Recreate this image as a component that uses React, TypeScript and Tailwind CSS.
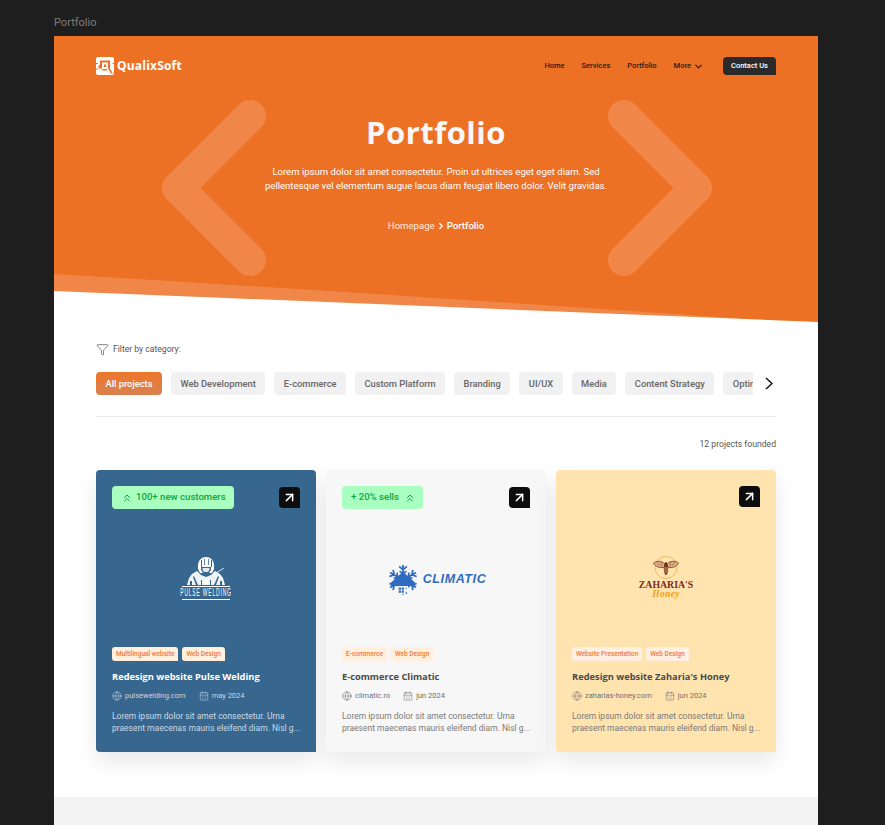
import { ArrowUpRight, CalendarDays, ChevronDown, ChevronRight, ChevronsUp, Funnel, Globe } from "lucide-react";
import clsx from "clsx";

const categories = ["Web Development", "E-commerce", "Custom Platform", "Branding", "UI/UX", "Media", "Content Strategy", "Optimization"];

function QualixLogo() {
    return (
        <svg width="18" height="18" viewBox="0 0 18 18">
            <rect width="18" height="18" rx="2" fill="#fff" />
            <path fill="#ED7125" d="M0 6h2v1H0zM0 11.5h2v1H0zM16.5 6H18v1h-1.5zM4 3.5h10v8l3 5h-3l-2.5-3H6.5l-1-2H2.5V9l1.5-1.5z" />
            <path fill="#fff" d="M6 5.5h6v6l3 4.5h-1.5L10.5 12H6z" />
            <path fill="#ED7125" d="M8 7.5h2.2V10H8z" />
        </svg>
    );
}

function PulseLogo() {
    return (
        <div className="flex flex-col items-center w-[48px] -mt-[2px]">
            <svg width="46" height="30" viewBox="0 0 46 30">
                <path fill="#fff" d="M15 13c-1-8 3-12 8-12s9 4 8 12l-2 4H17z" />
                <path fill="#376790" d="M18 4h1v7h-1zM21 3h.8v6H21zM25 3h.8v6H25zM28 4h1v7h-1z" />
                <path fill="#37678F" d="M18 11h10v3l-2 3h-6l-2-3z" />
                <path fill="#dfe7ee" d="M19.5 12h7v2l-1.5 2h-4l-1.5-2z" />
                <path fill="#fff" opacity="0.92" d="M14 15l4 4 5 2 5-2 4-4 5 3 3 4 2 7H4l2-7 3-4z" />
                <path fill="#376790" d="M11 20l4 9h-2l-3-8zM35 20l-4 9h2l3-8zM18 24h1v5h-1zM27 24h1v5h-1zM7 25h2v4H7zM37 25h2v4h-2z" />
                <circle cx="23" cy="25" r="2.6" fill="#fff" />
                <path stroke="#fff" strokeWidth="0.8" d="M30 19l11-7" />
            </svg>
            <div className="w-full h-px bg-white"></div>
            <div className="h-[12px] w-full flex justify-center font-['Liberation_Sans',sans-serif] text-[10px] leading-[12px] text-white tracking-[1.6px] whitespace-nowrap scale-x-[0.5]">PULSE WELDING</div>
            <div className="w-full h-px bg-white"></div>
        </div>
    );
}

function ClimaticLogo() {
    const arms = [0, 60, 120, 180, 240, 300];
    return (
        <div className="flex items-center gap-[3px] mt-[2px]">
            <svg width="34" height="30" viewBox="-12.5 -11 25 22">
                {arms.map((a) => (
                    <g key={a} transform={`rotate(${a})`} stroke="#2F6CC0" strokeWidth="1.3" fill="none">
                        <path d="M0 0V-11M-2.8 -10L0 -7.5L2.8 -10M-2.5 -6.5L0 -4.5L2.5 -6.5" />
                    </g>
                ))}
                <path fill="#2F6CC0" d="M0 -6L9 2V4.5H-9V2z" />
                <path fill="#f7f7f7" d="M-5 4.5h7v6h-7z" />
                <path fill="#2F6CC0" d="M-3.2 5.5h1.7v1.7h-1.7zM-1 5.5h1.7v1.7H-1zM-3.2 7.7h1.7v1.7h-1.7zM-1 7.7h1.7v1.7H-1z" />
            </svg>
            <span className="font-['Liberation_Sans',sans-serif] font-bold italic text-[12.5px] leading-none text-[#2F6CC0] tracking-[0.6px]">CLIMATIC</span>
        </div>
    );
}

function ZahariaLogo() {
    return (
        <div className="flex flex-col items-center -mt-[2px]">
            <svg width="26" height="23" viewBox="0 0 26 23">
                <circle cx="13" cy="11.5" r="11" fill="none" stroke="#EDA92E" strokeWidth="0.7" />
                <path fill="#d9b28c" stroke="#8A3A1E" strokeWidth="0.8" d="M12 8C8 4 3 5 0.5 7c1 3 6 6 11.5 4zM14 8c4-4 9-3 11.5-1-1 3-6 6-11.5 4z" />
                <path stroke="#8A3A1E" strokeWidth="0.5" d="M4 6l3 4M8 5.5l1 5M22 6l-3 4M18 5.5l-1 5" />
                <ellipse cx="13" cy="12.5" rx="2.2" ry="6.5" fill="#7A3318" />
                <path stroke="#EDC98A" strokeWidth="0.7" d="M11 12h4M11 14h4M11.5 16h3" />
            </svg>
            <div className="font-['Liberation_Serif',serif] font-bold text-[9.8px] leading-[11px] text-[#7A2A18] whitespace-nowrap">ZAHARIA'S</div>
            <div className="font-['Liberation_Serif',serif] italic font-bold text-[9.5px] leading-[9px] text-[#EE9F10] tracking-[0.3px]">Honey</div>
        </div>
    );
}

function Badge({ text, iconFirst }: { text: string; iconFirst?: boolean }) {
    return (
        <div className={clsx("h-[23px] flex items-center bg-[#A9FFC0] rounded-[4px] text-[#0DA63E] text-[9.6px] font-medium whitespace-nowrap", iconFirst ? "pl-[9px] pr-[8px] gap-[3px]" : "pl-[9px] pr-[7px] gap-[5px]")}>
            {iconFirst && <ChevronsUp size={12} strokeWidth={2} />}
            {text}
            {!iconFirst && <ChevronsUp size={12} strokeWidth={2} />}
        </div>
    );
}

type CardProps = {
    bg: string;
    badge?: string;
    iconFirst?: boolean;
    tags: string[];
    title: string;
    site: string;
    date: string;
    logo: React.ReactNode;
    dark?: boolean;
    tagClass: string;
};

function Card({ bg, badge, iconFirst, tags, title, site, date, logo, dark, tagClass }: CardProps) {
    return (
        <div className={clsx("w-[220px] h-[282px] rounded-[4px] p-[16px] pb-[18px] flex flex-col shadow-[0_10px_22px_rgba(0,0,0,0.09)]", bg, dark && "rounded-br-none", bg === "bg-[#FFE4B0]" && "rounded-br-none")}>
            <div className={clsx("flex items-center h-[23px]", badge ? "justify-between" : "justify-end -mt-[1px] mb-[1px]")}>
                {badge && <Badge text={badge} iconFirst={iconFirst} />}
                <div className="w-[21px] h-[21px] bg-[#0d0d0d] rounded-[4px] rounded-br-none flex items-center justify-center text-white">
                    <ArrowUpRight size={15} strokeWidth={2.4} />
                </div>
            </div>
            <div className="flex-1 flex items-center justify-center pt-[1px]">{logo}</div>
            <div className="flex gap-[4px]">
                {tags.map((t) => (
                    <span key={t} className={clsx("h-[14px] px-[4px] rounded-[3px] rounded-br-none text-[6.5px] leading-[14px] font-medium text-[#EE7A3A] whitespace-nowrap", tagClass)}>{t}</span>
                ))}
            </div>
            <div className={clsx("mt-[9px] text-[9.3px] leading-[13px] font-['Open_Sans',sans-serif] font-bold", dark ? "text-white" : "text-[#4a4a4a]")}>{title}</div>
            <div className={clsx("mt-[7px] flex items-center text-[7.5px] leading-[12px]", dark ? "text-[#c9d5e0]" : "text-[#6f6f6f]")}>
                <Globe size={10} strokeWidth={1.3} />
                <span className="ml-[3px]">{site}</span>
                <CalendarDays size={10} strokeWidth={1.3} className="ml-[13px]" />
                <span className="ml-[3px]">{date}</span>
            </div>
            <p className={clsx("mt-[9px] text-[8.5px] leading-[11.5px] whitespace-nowrap", dark ? "text-[#ccd8e3]" : "text-[#7a7a7a]")}>
                Lorem ipsum dolor sit amet consectetur. Urna<br />praesent maecenas mauris eleifend diam. Nisl g...
            </p>
        </div>
    );
}

export default function App() {
    return (
        <div className="w-[885px] h-[825px] bg-[#1E1E1E] overflow-hidden font-['Roboto',sans-serif]">
            <div className="h-[36px] pl-[54px] pt-[16px] text-[11px] leading-[14px] text-[#7d7d7d]">Portfolio</div>
            <div className="ml-[54px] w-[764px] h-[789px] bg-white overflow-hidden">
                <section className="relative h-[286px] bg-[#ED7125] overflow-hidden">
                    <svg className="absolute inset-0" width="764" height="286" viewBox="0 0 764 286" fill="none">
                        <path d="M196 80L124 152L196 224" stroke="#fff" strokeOpacity="0.16" strokeWidth="32" strokeLinecap="round" strokeLinejoin="round" />
                        <path d="M570 80L642 152L570 224" stroke="#fff" strokeOpacity="0.16" strokeWidth="32" strokeLinecap="round" strokeLinejoin="round" />
                        <path d="M0 238Q200 250 396 263T720 285L0 286z" fill="#fff" fillOpacity="0.16" />
                        <path d="M0 255L764 286H0z" fill="#fff" />
                    </svg>
                    <div className="relative">
                        <nav className="h-[18px] mt-[21px] mx-[42px] flex items-center justify-between">
                            <div className="flex items-center gap-[3px]">
                                <QualixLogo />
                                <span className="font-['Open_Sans',sans-serif] font-bold text-[12px] text-white tracking-[0.2px]">QualixSoft</span>
                            </div>
                            <div className="flex items-center text-[7.5px] font-medium text-[#1d1d1d]">
                                <span>Home</span>
                                <span className="ml-[17px]">Services</span>
                                <span className="ml-[17px]">Portfolio</span>
                                <span className="ml-[17px]">More</span>
                                <ChevronDown size={11} strokeWidth={2.4} className="ml-[2px]" />
                                <span className="ml-[19px] w-[53px] h-[18px] bg-[#2A2A2A] rounded-[4px] rounded-br-none text-white flex items-center justify-center">Contact Us</span>
                            </div>
                        </nav>
                        <div className="flex flex-col items-center">
                            <h1 className="mt-[36px] font-['Open_Sans',sans-serif] text-[31px] leading-[42px] font-bold text-[#f7f7f7] tracking-[0.5px]">Portfolio</h1>
                            <p className="mt-[12px] text-[9.55px] leading-[14px] text-white text-center">
                                Lorem ipsum dolor sit amet consectetur. Proin ut ultrices eget eget diam. Sed<br />
                                pellentesque vel elementum augue lacus diam feugiat libero dolor. Velit gravidas.
                            </p>
                            <div className="mt-[26px] flex items-center text-[9.6px] leading-[14px] text-white">
                                <span className="text-[#fde7d8]">Homepage</span>
                                <ChevronRight size={10} strokeWidth={3} className="mx-[1px]" />
                                <span className="font-medium">Portfolio</span>
                            </div>
                        </div>
                    </div>
                </section>

                <section className="px-[42px]">
                    <div className="mt-[20px] flex items-center h-[14px] text-[#555] text-[8.6px]">
                        <Funnel size={13} strokeWidth={1} className="text-[#222]" />
                        <span className="ml-[4px]">Filter by category:</span>
                    </div>
                    <div className="mt-[16px] flex items-center justify-between">
                        <div className="w-[657px] overflow-hidden flex gap-[9px]">
                            <span className="h-[23px] px-[9.5px] shrink-0 rounded-[4px] bg-gradient-to-b from-[#ED7626] to-[#D9814E] text-white text-[9.3px] leading-[23px] font-medium">All projects</span>
                            {categories.map((c) => (
                                <span key={c} className="h-[23px] px-[9.5px] shrink-0 rounded-[4px] bg-[#F1F1F1] text-[#666] text-[9.3px] leading-[23px] font-medium">{c}</span>
                            ))}
                        </div>
                        <svg width="8" height="13" viewBox="0 0 8 13" fill="none" className="mr-[3px]">
                            <path d="M1 1L7 6.5L1 12" stroke="#111" strokeWidth="1.5" />
                        </svg>
                    </div>
                    <div className="mt-[21px] h-px bg-[#ECECEC]"></div>
                    <div className="mt-[21px] text-right text-[8.6px] leading-[12px] text-[#555]">12 projects founded</div>
                    <div className="mt-[20px] flex gap-[10px]">
                        <Card bg="bg-[#37678F]" dark badge="100+ new customers" iconFirst tagClass="bg-[#FFEFDC]"
                            tags={["Multilingual website", "Web Design"]} title="Redesign website Pulse Welding" site="pulsewelding.com" date="may 2024" logo={<PulseLogo />} />
                        <Card bg="bg-[#F7F7F7]" badge="+ 20% sells" tagClass="bg-[#FFEFDC]"
                            tags={["E-commerce", "Web Design"]} title="E-commerce Climatic" site="climatic.ro" date="jun 2024" logo={<ClimaticLogo />} />
                        <Card bg="bg-[#FFE4B0]" tagClass="bg-[#FFF0E2]"
                            tags={["Website Presentation", "Web Design"]} title="Redesign website Zaharia's Honey" site="zaharias-honey.com" date="jun 2024" logo={<ZahariaLogo />} />
                    </div>
                </section>
                <div className="mt-[45px] h-[40px] bg-[#F3F3F3]"></div>
            </div>
        </div>
    );
}
